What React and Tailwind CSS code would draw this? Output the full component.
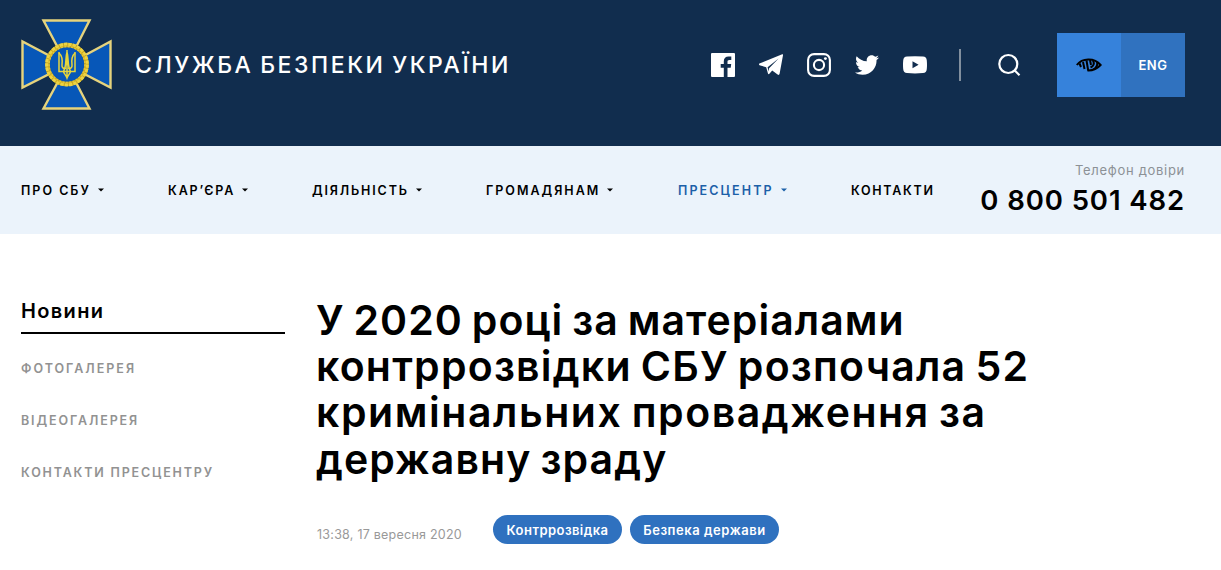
import React from "react";
import { FaTwitter } from "react-icons/fa";

const navItems = [
  { label: "ПРО СБУ", box: "w-[147px]", text: "tracking-[2px]", caret: true },
  { label: "КАР’ЄРА", box: "w-[144px]", text: "tracking-[1.85px]", caret: true },
  { label: "ДІЯЛЬНІСТЬ", box: "w-[174px]", text: "tracking-[1.85px]", caret: true },
  { label: "ГРОМАДЯНАМ", box: "w-[192px]", text: "tracking-[2px]", caret: true },
  { label: "ПРЕСЦЕНТР", box: "w-[173px]", text: "tracking-[2.1px]", caret: true, active: true },
  { label: "КОНТАКТИ", box: "w-[90px]", text: "tracking-[1.7px]" },
];

const sideLinks = [
  { label: "ФОТОГАЛЕРЕЯ", text: "tracking-[2px]" },
  { label: "ВІДЕОГАЛЕРЕЯ", text: "tracking-[1.88px]" },
  { label: "КОНТАКТИ ПРЕСЦЕНТРУ", text: "tracking-[1.82px]" },
];

const titleLines = [
  { label: "У 2020 році за матеріалами", text: "tracking-[1.05px]" },
  { label: "контррозвідки СБУ розпочала 52", text: "tracking-[1.23px]" },
  { label: "кримінальних провадження за", text: "tracking-[1.55px]" },
  { label: "державну зраду", text: "tracking-[1.1px]" },
];

const Emblem = () => (
  <svg viewBox="0 0 94 94" className="h-[94px] w-[94px] shrink-0">
    <g fill="#0757b8" stroke="#e6d37c" strokeWidth="2.400">
      <path d="M23.5 2.5H69.5L47 47Z" />
      <path d="M23.5 90.5H69.5L47 47Z" />
      <path d="M2.5 23.5V69.5L47 47Z" />
      <path d="M90.5 23.5V69.5L47 47Z" />
    </g>
    <circle cx="47" cy="46.5" r="19.5" fill="#0757b8" stroke="#c9a820" strokeWidth="4.5" />
    <circle cx="47" cy="46.5" r="20.4" fill="none" stroke="#ecd343" strokeWidth="3" strokeDasharray="3.4 1" />
    <circle cx="47" cy="46.5" r="18" fill="none" stroke="#e3c63a" strokeWidth="1.600" strokeDasharray="2 1.4" />
    <g fill="none" stroke="#e6d53c" strokeWidth="1.500">
      <path d="M39 34V53.500H55V34" />
      <path d="M39 35C42.500 38 42.500 43 42 47C41.500 50 44 51 46 50" />
      <path d="M55 35C51.500 38 51.500 43 52 47C52.500 50 50 51 48 50" />
      <path d="M47 32V59M47 34C45 41 47 47 43.500 53.500C44 56 46 57 47 60C48 57 50 56 50.500 53.500C47 47 49 41 47 34" />
    </g>
  </svg>
);

const FacebookIcon = () => (
  <svg viewBox="0 0 24 24" className="h-6 w-6" fill="white">
    <path d="M1 0H23Q24 0 24 1V23Q24 24 23 24H16.500V14.700H19.700L20.200 11H16.500V8.700C16.500 7.600 16.900 6.900 18.400 6.900H20.300V3.600C19.900 3.500 18.800 3.400 17.500 3.400C14.700 3.400 12.800 5.100 12.800 8.200V11H9.700V14.700H12.800V24H1Q0 24 0 23V1Q0 0 1 0Z" />
  </svg>
);

const TelegramIcon = () => (
  <svg viewBox="0 0 24 24" className="h-6 w-6" fill="white">
    <path d="M.4 10.500L23.200 1.300Q24.300 1 24 2.300L20.600 20.800Q20.200 22.600 18.600 21.600L13.200 17.600L10.400 20.800Q9.300 22 8.900 20.200L7.200 14.200L.5 12.200Q-.6 11.300 .4 10.500ZM8.600 14.300L9.600 18.500L10.100 15.300L19.600 5.600Z" fillRule="evenodd" />
  </svg>
);

const InstagramIcon = () => (
  <svg viewBox="0 0 24 24" className="h-6 w-6" fill="none" stroke="white" strokeWidth="2.100">
    <rect x="1.100" y="1.100" width="21.800" height="21.800" rx="6" />
    <circle cx="12" cy="12" r="5.100" />
    <circle cx="18.400" cy="5.600" r="1.450" fill="white" stroke="none" />
  </svg>
);

const YoutubeIcon = () => (
  <svg viewBox="0 0 24 24" className="h-6 w-6">
    <path
      fill="white"
      fillRule="evenodd"
      d="M4 3.500Q12 2.900 20 3.500Q23.500 3.700 23.800 7.500Q24.200 12 23.800 16Q23.500 19.900 20 20.100Q12 20.700 4 20.100Q.5 19.900 .2 16Q-.2 12 .2 7.500Q.5 3.700 4 3.500ZM9.500 8.300V15.200L15.600 11.750Z"
    />
  </svg>
);

const SearchIcon = () => (
  <svg viewBox="0 0 24 24" className="h-6 w-6" fill="none" stroke="white" strokeWidth="2.200">
    <circle cx="11.300" cy="11" r="9" />
    <path d="M17.500 17.300L22.500 22.300" />
  </svg>
);

const EyeIcon = () => (
  <svg viewBox="0 0 26 14" className="h-[14px] w-[26px]" fill="none" stroke="black" strokeWidth="2">
    <path d="M.8 7C6 .2 18 -.8 24.600 7C20.500 11.500 16 12.600 11.500 12.400" />
    <path d="M3.500 5.500L5 9M7 4L8.500 11M10.500 2.500L12.200 12.500" strokeWidth="2" />
    <path d="M14 2L15 7M17 2.500C18.500 5.500 18 8 14.500 9.500M21 4C21.800 6.500 20.500 9.500 17.500 11.500" strokeWidth="2" />
  </svg>
);

const Caret = () => (
  <svg viewBox="0 0 6 4" className="mt-[-2px] ml-[7px] h-[4px] w-[6px] shrink-0" fill="currentColor">
    <path d="M0 0.500H6L3 3.500Z" />
  </svg>
);

const Header = () => (
  <header className="flex h-[146px] items-start bg-[#112d4e] pl-5 text-white">
    <div className="mt-[18px]">
      <Emblem />
    </div>
    <div className="mt-[47px] ml-[21px] w-[576px] text-[23px] leading-9 font-medium tracking-[2.56px] [word-spacing:-2px] whitespace-nowrap">
      СЛУЖБА БЕЗПЕКИ УКРАЇНИ
    </div>
    <div className="mt-[53px] flex gap-6">
      <FacebookIcon />
      <TelegramIcon />
      <InstagramIcon />
      <FaTwitter className="h-6 w-6" />
      <YoutubeIcon />
    </div>
    <div className="mt-[49px] ml-8 h-8 w-[2px] bg-[#82909f]" />
    <div className="mt-[53px] ml-9">
      <SearchIcon />
    </div>
    <div className="mt-[33px] ml-9 flex h-16 w-32">
      <button className="flex w-16 items-center justify-center bg-[#3682db]">
        <EyeIcon />
      </button>
      <button className="flex w-16 items-center justify-center bg-[#3072bf] pt-[2px] text-[13px] font-semibold tracking-[0.5px]">
        ENG
      </button>
    </div>
  </header>
);

const NavBar = () => (
  <nav className="flex h-[88px] bg-[#ebf3fb] pr-[36px] pl-[21px]">
    {navItems.map((item) => (
      <div
        key={item.label}
        className={`flex h-[88px] shrink-0 items-center pt-[2px] text-[12.5px] font-semibold whitespace-nowrap ${item.box} ${item.text} ${item.active ? "text-[#1c60a8]" : "text-black"}`}
      >
        {item.label}
        {item.caret && <Caret />}
      </div>
    ))}
    <div className="ml-auto flex flex-col items-end pt-[14px] whitespace-nowrap">
      <p className="text-[13px] leading-5 tracking-[0.7px] text-[#8c9196]">Телефон довіри</p>
      <p className="mt-1 text-[27.5px] leading-8 font-semibold tracking-[0.9px]">0 800 501 482</p>
    </div>
  </nav>
);

const Sidebar = () => (
  <aside className="w-[264px] shrink-0">
    <h2 className="mt-[62px] h-[38px] border-b-2 border-black text-[20px] leading-[30px] font-semibold tracking-[1.35px]">
      Новини
    </h2>
    <ul className="mt-[25px] flex flex-col gap-8 text-[12.5px] leading-5 font-semibold text-[#929292]">
      {sideLinks.map((link) => (
        <li key={link.label} className={`whitespace-nowrap ${link.text}`}>
          {link.label}
        </li>
      ))}
    </ul>
  </aside>
);

const Article = () => (
  <main className="ml-8">
    <h1 className="mt-[63px] ml-[-1px] text-[41px] leading-[46.2px] font-semibold [word-spacing:-2.5px]">
      {titleLines.map((line) => (
        <span key={line.label} className={`block whitespace-nowrap ${line.text}`}>
          {line.label}
        </span>
      ))}
    </h1>
    <div className="mt-[33px] flex">
      <time className="mt-[10px] w-[176px] text-[12.5px] leading-5 tracking-[0.24px] whitespace-nowrap text-[#999999]">
        13:38, 17 вересня 2020
      </time>
      <div className="flex gap-2 text-[13px] font-semibold text-white">
        <span className="flex h-[29px] w-[129px] items-center justify-center rounded-full bg-[#2f71bf] pt-[3px] tracking-[0.45px]">
          Контррозвідка
        </span>
        <span className="flex h-[29px] w-[149px] items-center justify-center rounded-full bg-[#2f71bf] pt-[3px] tracking-[0.55px]">
          Безпека держави
        </span>
      </div>
    </div>
  </main>
);

const App = () => {
  return (
    <div className="h-[570px] w-[1221px] overflow-hidden bg-white font-['Inter',sans-serif] text-black">
      <Header />
      <NavBar />
      <div className="flex pl-[21px]">
        <Sidebar />
        <Article />
      </div>
    </div>
  );
};

export default App;
